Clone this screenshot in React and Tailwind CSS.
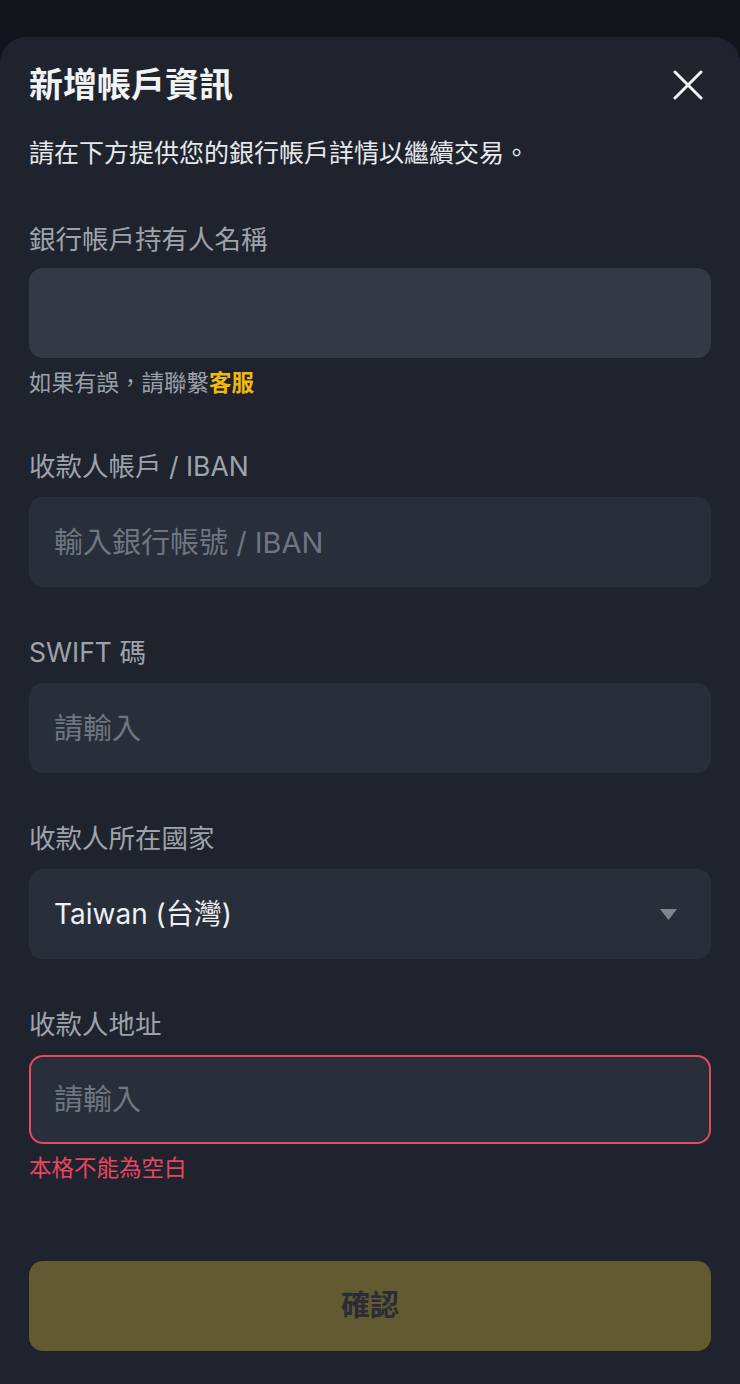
import { useState } from "react";

const font = "font-['Inter','Noto_Sans_CJK_TC',sans-serif]";

function Field({ label, children, className = "" }) {
  return (
    <div className={className}>
      <div className="text-[26.5px] leading-[32px] text-[#9ea3ab]">{label}</div>
      {children}
    </div>
  );
}

export default function App() {
  const [iban, setIban] = useState("");
  const [swift, setSwift] = useState("");
  const [addr, setAddr] = useState("");

  return (
    <div className={`min-h-[1384px] bg-[#11141b] pt-[37px] ${font}`}>
      <div className="min-h-[1347px] rounded-t-[26px] bg-[#1f232d] px-[29px] pt-[28px]">
        <div className="flex items-center justify-between">
          <h1 className="text-[34px] leading-[40px] font-bold text-[#f2f3f5]">新增帳戶資訊</h1>
          <button className="mr-[8px] text-[#f2f3f5]">
            <svg width="30" height="30" viewBox="0 0 30 30" fill="none" stroke="currentColor" strokeWidth="3" strokeLinecap="round">
              <path d="M2 2 L28 28 M28 2 L2 28" />
            </svg>
          </button>
        </div>
        <p className="mt-[32px] text-[25px] leading-[32px] text-[#e6e8eb]">請在下方提供您的銀行帳戶詳情以繼續交易。</p>

        <Field label="銀行帳戶持有人名稱" className="mt-[54px]">
          <div className="mt-[13px] h-[90px] rounded-[14px] bg-[#343a45]" />
          <div className="mt-[11px] text-[22.5px] leading-[28px] text-[#9aa0a8]">
            如果有誤，請聯繫<span className="font-bold text-[#f0b90b]">客服</span>
          </div>
        </Field>

        <Field label="收款人帳戶 / IBAN" className="mt-[53px]">
          <input
            value={iban}
            onChange={(e) => setIban(e.target.value)}
            placeholder="輸入銀行帳號 / IBAN"
            className="mt-[15px] h-[90px] w-full rounded-[14px] bg-[#282e3a] px-[25px] text-[29px] text-[#eceef0] placeholder:text-[#6f7681] outline-none"
          />
        </Field>

        <Field label="SWIFT 碼" className="mt-[49px]">
          <input
            value={swift}
            onChange={(e) => setSwift(e.target.value)}
            placeholder="請輸入"
            className="mt-[15px] h-[90px] w-full rounded-[14px] bg-[#282e3a] px-[25px] text-[29px] text-[#eceef0] placeholder:text-[#6f7681] outline-none"
          />
        </Field>

        <Field label="收款人所在國家" className="mt-[49px]">
          <div className="mt-[15px] flex h-[90px] items-center justify-between rounded-[14px] bg-[#282e3a] pl-[25px] pr-[34px]">
            <span className="text-[28px] text-[#eef0f2]">Taiwan (台灣)</span>
            <svg width="17" height="11" viewBox="0 0 17 11">
              <path d="M0 0 H17 L8.5 11 Z" fill="#80868f" />
            </svg>
          </div>
        </Field>

        <Field label="收款人地址" className="mt-[49px]">
          <input
            value={addr}
            onChange={(e) => setAddr(e.target.value)}
            placeholder="請輸入"
            className="mt-[15px] h-[89px] w-full rounded-[14px] border-2 border-[#e14b61] bg-[#282e3a] px-[23px] text-[29px] text-[#eceef0] placeholder:text-[#6f7681] outline-none"
          />
          <div className="mt-[10px] text-[22.5px] leading-[28px] text-[#e8475f]">本格不能為空白</div>
        </Field>

        <button className="mt-[79px] flex h-[90px] w-full items-center justify-center rounded-[14px] bg-[#625b31] text-[29px] font-bold text-[#2a2c36]">
          確認
        </button>
      </div>
    </div>
  );
}
